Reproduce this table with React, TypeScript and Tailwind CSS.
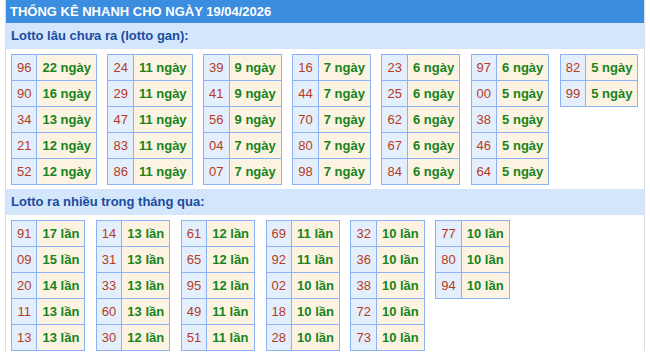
import React from "react";

type Pair = [string, number];

const gan: Pair[][] = [
  [["96", 22], ["90", 16], ["34", 13], ["21", 12], ["52", 12]],
  [["24", 11], ["29", 11], ["47", 11], ["83", 11], ["86", 11]],
  [["39", 9], ["41", 9], ["56", 9], ["04", 7], ["07", 7]],
  [["16", 7], ["44", 7], ["70", 7], ["80", 7], ["98", 7]],
  [["23", 6], ["25", 6], ["62", 6], ["67", 6], ["84", 6]],
  [["97", 6], ["00", 5], ["38", 5], ["46", 5], ["64", 5]],
  [["82", 5], ["99", 5]],
];

const nhieu: Pair[][] = [
  [["91", 17], ["09", 15], ["20", 14], ["11", 13], ["13", 13]],
  [["14", 13], ["31", 13], ["33", 13], ["60", 13], ["30", 12]],
  [["61", 12], ["65", 12], ["95", 12], ["49", 11], ["51", 11]],
  [["69", 11], ["92", 11], ["02", 10], ["18", 10], ["28", 10]],
  [["32", 10], ["36", 10], ["38", 10], ["72", 10], ["73", 10]],
  [["77", 10], ["80", 10], ["94", 10]],
];

const LotoTable = ({ rows, unit }: { rows: Pair[]; unit: string }) => (
  <table className="border-collapse self-start">
    <tbody>
      {rows.map(([so, n]) => (
        <tr key={so}>
          <td className="h-[26px] border border-[#8db1f5] bg-[#e3effd] px-[5px] text-center text-[#b83a1c]">
            {so}
          </td>
          <td className="h-[26px] border border-[#8db1f5] bg-[#fdf3e2] px-[5px] font-bold text-[#16841a]">
            {n} {unit}
          </td>
        </tr>
      ))}
    </tbody>
  </table>
);

const SubTitle = ({ children }: { children: React.ReactNode }) => (
  <div className="h-[26px] bg-[#d3e6fb] px-[5px] text-[13px] font-bold leading-[26px] text-[#1a4c9f]">
    {children}
  </div>
);

export default function App() {
  return (
    <div className="h-[352px] w-[650px] overflow-hidden bg-white font-['Liberation_Sans',Arial,sans-serif] text-[13px]">
      <div className="ml-[5px] w-[640px] border-r border-[#d8dde4] border-l">
        <div className="h-[23px] bg-[#3b8de0] pl-[4px] text-[13px] font-bold leading-[23px] text-white">
          THỐNG KÊ NHANH CHO NGÀY 19/04/2026
        </div>
        <SubTitle>Lotto lâu chưa ra (lotto gan):</SubTitle>
        <div className="flex gap-[10.5px] px-[5px] pb-[4px] pt-[5px]">
          {gan.map((t, i) => (
            <LotoTable key={i} rows={t} unit="ngày" />
          ))}
        </div>
        <SubTitle>Lotto ra nhiều trong tháng qua:</SubTitle>
        <div className="flex gap-[10.5px] px-[5px] pt-[5px]">
          {nhieu.map((t, i) => (
            <LotoTable key={i} rows={t} unit="lần" />
          ))}
        </div>
      </div>
    </div>
  );
}
